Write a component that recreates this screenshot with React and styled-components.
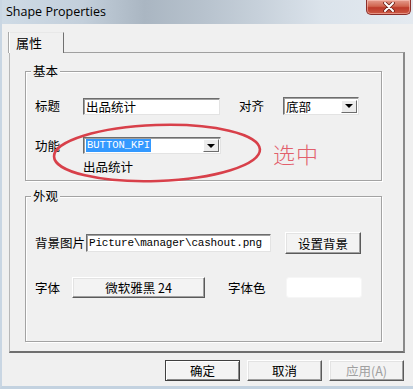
import React from "react";
import styled, { createGlobalStyle } from "styled-components";

const Global = createGlobalStyle`
  html, body { margin: 0; padding: 0; background: #f0f0f0; }
  body { font-family: "Noto Sans CJK SC", "Noto Sans", sans-serif; font-size: 12px; color: #000; }
`;

const Win = styled.div`
  position: relative;
  width: 413px;
  height: 389px;
  box-sizing: border-box;
  background: #f0f0f0;
  border-left: 2px solid #c9d6e3;
  border-bottom: 3px solid #c3d2e0;
  display: flex;
  flex-direction: column;
  overflow: hidden;
`;

const TitleBar = styled.div`
  height: 24px;
  margin-left: -2px;
  flex: none;
  display: flex;
  justify-content: space-between;
  align-items: flex-start;
  background: linear-gradient(90deg, #cfdbe6 0%, #c3cfdb 20%, #aab6c2 35%, #b8c3ce 50%, #c6d0da 62%, #dbe3eb 78%, #e4eaf0 100%);
`;

const Title = styled.span`
  font-family: "Open Sans", "Noto Sans", sans-serif;
  font-size: 12.5px;
  line-height: 24px;
  padding-left: 6px;
  color: #000;
`;

const Close = styled.div`
  width: 45px;
  height: 15px;
  margin-right: 2px;
  box-sizing: border-box;
  border: 1px solid #8a2e2a;
  border-top: none;
  border-radius: 0 0 5px 5px;
  background: linear-gradient(180deg, #e59c8e 0%, #d0654f 45%, #bd3a2a 55%, #cc5a45 100%);
  display: flex;
  align-items: center;
  justify-content: center;
  box-shadow: inset 0 0 0 1px rgba(255, 210, 200, 0.5);
`;

const Body = styled.div`
  flex: 1;
  display: flex;
  flex-direction: column;
  padding: 8px 7px 0 7px;
`;

const TabStrip = styled.div`
  display: flex;
  height: 20px;
`;

const Tab = styled.div`
  position: relative;
  z-index: 1;
  width: 55px;
  height: 21px;
  box-sizing: border-box;
  border: 1px solid #a0a0a0;
  border-left-color: #ffffff;
  border-top-color: #e8e8e8;
  border-right-color: #707070;
  border-bottom: none;
  box-shadow: -1px 0 0 #a9a9a9;
  background: #f0f0f0;
  padding-left: 6px;
  font-size: 13px;
  line-height: 20px;
`;

const Pane = styled.div`
  width: 396px;
  height: 301px;
  box-sizing: border-box;
  border: 1px solid #a0a0a0;
  border-left-color: #b8b8b8;
  border-right: 2px solid #8a8a8a;
  border-bottom: 2px solid #6f6f6f;
  padding: 18px 21px 0 15px;
  display: flex;
  flex-direction: column;
  gap: 15px;
`;

const Group = styled.div`
  position: relative;
  height: ${(p) => p.$h}px;
  box-sizing: border-box;
  border: 1px solid #a3a3a3;
  box-shadow: inset 1px 1px 0 #ffffff, 1px 1px 0 #ffffff;
  padding: 0 0 0 9px;
  display: flex;
  flex-direction: column;
`;

const Legend = styled.span`
  position: absolute;
  top: -9px;
  left: 5px;
  padding: 0 2px;
  background: #f0f0f0;
  font-size: 12.5px;
  line-height: 16px;
`;

const Row = styled.div`
  display: flex;
  align-items: center;
  height: ${(p) => p.$h}px;
  margin-top: ${(p) => p.$mt}px;
`;

const Label = styled.span`
  width: ${(p) => p.$w}px;
  margin-left: ${(p) => p.$ml || 0}px;
  flex: none;
  font-size: 12.5px;
  line-height: 16px;
  white-space: nowrap;
`;

const Field = styled.div`
  width: ${(p) => p.$w}px;
  height: ${(p) => p.$h}px;
  box-sizing: border-box;
  flex: none;
  background: #fff;
  border: 1px solid;
  border-color: #6d6d6d #e3e3e3 #e3e3e3 #6d6d6d;
  box-shadow: inset 1px 1px 0 #a0a0a0;
  display: flex;
  align-items: center;
  padding-left: 2px;
  overflow: hidden;
  white-space: nowrap;
  font-size: 12.5px;
`;

const Mono = styled.span`
  font-family: "Liberation Mono", "DejaVu Sans Mono", monospace;
  font-size: 11px;
  letter-spacing: ${(p) => p.$ls || 0}px;
`;

const Selected = styled.span`
  font-family: "Liberation Mono", "DejaVu Sans Mono", monospace;
  font-size: 10.5px;
  background: #3399ff;
  color: #fff;
  line-height: 13px;
  padding: 0 1px;
`;

const ComboText = styled.div`
  flex: 1;
  display: flex;
  align-items: center;
`;

const DropBtn = styled.div`
  width: 16px;
  height: 13px;
  margin-right: 1px;
  box-sizing: border-box;
  border: 1px solid;
  border-color: #ffffff #6d6d6d #6d6d6d #ffffff;
  background: #ececec;
  display: flex;
  align-items: center;
  justify-content: center;
  &::after {
    content: "";
    border-left: 4px solid transparent;
    border-right: 4px solid transparent;
    border-top: 4px solid #000;
  }
`;

const SubText = styled.div`
  margin: 6px 0 0 48px;
  font-size: 12.5px;
  line-height: 14px;
`;

const Button = styled.div`
  width: ${(p) => p.$w}px;
  height: ${(p) => p.$h}px;
  margin-left: ${(p) => p.$ml || 0}px;
  flex: none;
  box-sizing: border-box;
  background: #f3f3f3;
  border: 1px solid;
  border-color: ${(p) => (p.$default ? "#404040" : "#ffffff #5a5a5a #5a5a5a #ffffff")};
  box-shadow: ${(p) =>
    p.$default
      ? "inset 1px 1px 0 #ffffff, inset -1px -1px 0 #8a8a8a"
      : "inset -1px -1px 0 #a0a0a0, inset 1px 1px 0 #e3e3e3"};
  display: flex;
  align-items: center;
  justify-content: center;
  font-size: 12.5px;
  color: ${(p) => (p.$disabled ? "#a0a0a0" : "#000")};
  white-space: nowrap;
`;

const Swatch = styled.div`
  width: 76px;
  height: 21px;
  flex: none;
  background: #ffffff;
  border-radius: 3px;
  border: 1px solid #f6f6f6;
  box-sizing: border-box;
`;

const Footer = styled.div`
  display: flex;
  justify-content: flex-end;
  gap: 7px;
  padding: 7px 2px 0 0;
`;

const Annot = styled.svg`
  position: absolute;
  left: 0;
  top: 0;
  pointer-events: none;
`;

const AnnotText = styled.span`
  position: absolute;
  left: 271px;
  top: 140px;
  font-size: 22px;
  font-weight: 300;
  line-height: 26px;
  color: #e2606c;
  letter-spacing: 1px;
`;

export default function App() {
  return (
    <>
      <Global />
      <Win>
        <TitleBar>
          <Title>Shape Properties</Title>
          <Close>
            <svg width="14" height="10" viewBox="0 0 14 10">
              <path d="M3 1 L11 9 M11 1 L3 9" stroke="#6a2018" strokeWidth="3.6" strokeLinecap="round" />
              <path d="M3 1 L11 9 M11 1 L3 9" stroke="#ffffff" strokeWidth="2" strokeLinecap="round" />
            </svg>
          </Close>
        </TitleBar>
        <Body>
          <TabStrip>
            <Tab>属性</Tab>
          </TabStrip>
          <Pane>
            <Group $h={110}>
              <Legend>基本</Legend>
              <Row $h={18} $mt={25}>
                <Label $w={48}>标题</Label>
                <Field $w={137} $h={17}>出品统计</Field>
                <Label $w={44} $ml={19}>对齐</Label>
                <Field $w={76} $h={18}>
                  <ComboText>底部</ComboText>
                  <DropBtn />
                </Field>
              </Row>
              <Row $h={17} $mt={22}>
                <Label $w={48}>功能</Label>
                <Field $w={138} $h={17}>
                  <ComboText>
                    <Selected>BUTTON_KPI</Selected>
                  </ComboText>
                  <DropBtn />
                </Field>
              </Row>
              <SubText>出品统计</SubText>
            </Group>
            <Group $h={146}>
              <Legend>外观</Legend>
              <Row $h={22} $mt={35}>
                <Label $w={51}>背景图片</Label>
                <Field $w={185} $h={18}>
                  <Mono $ls={-0.2}>Picture\manager\cashout.png</Mono>
                </Field>
                <Button $w={76} $h={22} $ml={14}>设置背景</Button>
              </Row>
              <Row $h={21} $mt={23}>
                <Label $w={37}>字体</Label>
                <Button $w={133} $h={21}>微软雅黑 24</Button>
                <Label $w={58} $ml={23}>字体色</Label>
                <Swatch />
              </Row>
            </Group>
          </Pane>
          <Footer>
            <Button $w={75} $h={21} $default>确定</Button>
            <Button $w={75} $h={21}>取消</Button>
            <Button $w={75} $h={21} $disabled>应用(A)</Button>
          </Footer>
        </Body>
        <Annot width="413" height="389" viewBox="0 0 413 389">
          <ellipse
            cx="155"
            cy="153"
            rx="103"
            ry="28"
            transform="rotate(-2 155 153)"
            fill="none"
            stroke="#d8404a"
            strokeWidth="2.6"
          />
        </Annot>
        <AnnotText>选中</AnnotText>
      </Win>
    </>
  );
}
